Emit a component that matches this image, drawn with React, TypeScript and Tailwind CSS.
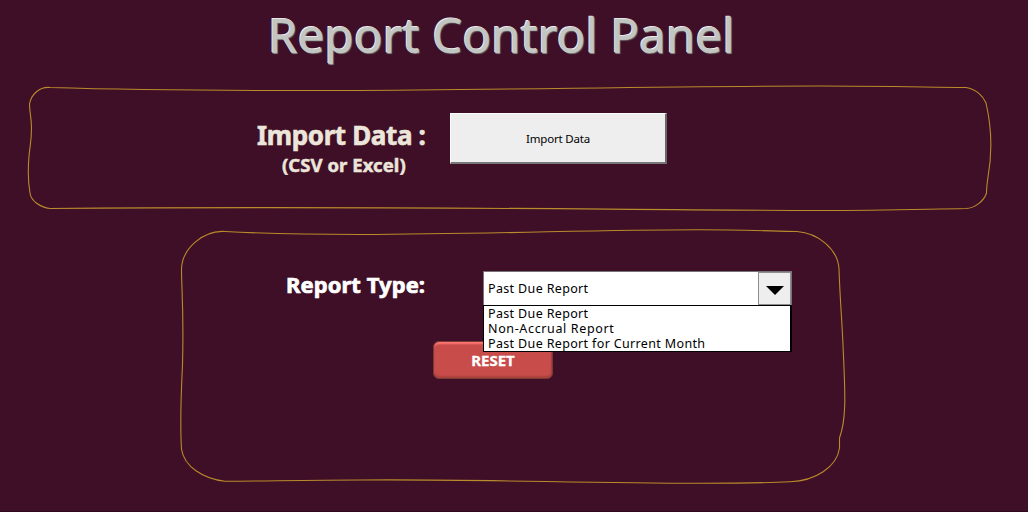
import React from 'react';

const options = [
  { label: 'Past Due Report', spacing: 'tracking-[0.350px]' },
  { label: 'Non-Accrual Report', spacing: 'tracking-[0.640px]' },
  { label: 'Past Due Report for Current Month', spacing: 'tracking-[0.350px]' },
];

export default function App() {
  return (
    <main className="flex h-[512px] w-[1028px] flex-col overflow-hidden border-b border-[#2c0a1c] bg-[#3f0f28] font-['Noto_Sans','Open_Sans',sans-serif]">
      <header className="flex h-[85px] shrink-0 pl-[268px]">
        <h1 className="h-[70px] whitespace-nowrap text-[47.500px] leading-[70px] tracking-[0.120px] text-[#c3c5c3] [-webkit-text-stroke:0.5px_#c3c5c3] [text-shadow:-1px_-1px_0_#f4f4f4,1px_1px_1px_#6b706b]">
          Report Control Panel
        </h1>
      </header>

      <section className="relative ml-[27px] flex h-[127px] w-[966px] shrink-0">
        <svg className="absolute inset-0" width="966" height="127" viewBox="27 85 966 127" fill="none">
          <path
            d="M50 87.5C150 90.5 240 90.7 340 90.5C520 90 650 86 820 86C880 86 920 87 966 87.5C976 89 983 96 986 103C992 129 992.5 152 988 177C987 184 986.5 188 986.5 193C984 201 975 208 966 208.5C910 209.5 880 210.5 820 210.5C600 210 400 205.500 50 208.500C40 207 31 201 30 193C28 182 28 168 29 156C30 146 31.500 141 31.500 128C31.500 118 29.500 112 29.500 104C31 95 39 86.500 50 87.500Z"
            stroke="#b98b2b"
            strokeWidth="1.1"
          />
        </svg>
        <div className="flex h-[90px] w-[423px] flex-col pt-[32px] text-[#ece6da]">
          <h2 className="ml-[230px] whitespace-nowrap text-[26px] leading-[36px] font-bold tracking-[-0.380px] [-webkit-text-stroke:0.6px_#ece6da]">
            Import Data :
          </h2>
          <p className="ml-[255px] whitespace-nowrap text-[18.500px] leading-[24px] font-bold tracking-[0.060px] [-webkit-text-stroke:0.5px_#ece6da]">
            (CSV or Excel)
          </p>
        </div>
        <button className="mt-[28px] h-[51px] w-[217px] border border-t-white border-r-2 border-r-[#6b6668] border-b-2 border-b-[#777678] border-l-white bg-[#eee] pt-[2px] text-[11.500px] tracking-[-0.200px] text-black">
          Import Data
        </button>
      </section>

      <section className="relative mt-[17px] ml-[179px] flex h-[257px] w-[669px] shrink-0 flex-col">
        <svg className="absolute inset-0" width="669" height="257" viewBox="179 229 669 257" fill="none">
          <path
            d="M225 231.500C280 234.500 310 234.500 360 234.500C500 234 600 229.500 700 229.700C740 229.700 770 231 797 231.500C818 233 838 249 839 269C840 300 842 320 843 345C845 390 847 418 839.500 438V448C837 467 815 481 790 481.700C765 483 740 483.300 700 483.300C580 483.300 480 479 360 480C310 480 270 481 225 481.300C204 479 184 467 181.500 449C180 425 181 395 182.500 365C184 310 181.500 290 181.500 269C182 249 203 230 225 231.500Z"
            stroke="#b98b2b"
            strokeWidth="1.1"
          />
        </svg>
        <div className="relative flex h-[77px] pt-[42px]">
          <h2 className="-mt-px h-[28px] w-[304px] pl-[107px] text-[22px] leading-[28px] font-bold tracking-[0.060px] whitespace-nowrap text-white [-webkit-text-stroke:0.7px_white]">
            Report Type:
          </h2>
          <div className="relative flex h-[35px] w-[309px] border border-[#777477] bg-white text-[12.500px] tracking-[0.350px] text-black">
            <span className="flex-1 pl-[4px] leading-[33px]">Past Due Report</span>
            <span className="flex w-[33px] items-center justify-center border border-[#8d8d8d] bg-[#eee]">
              <svg width="18" height="9" viewBox="0 0 18 9" className="mt-[3px]">
                <path d="M0 0H18L9 9Z" />
              </svg>
            </span>
            <ul className="absolute top-[33px] left-[-1px] z-10 h-[47px] w-[309px] border border-r-2 border-black bg-white pl-[4px] leading-[15px] whitespace-nowrap">
              {options.map((option) => (
                <li key={option.label} className={option.spacing}>
                  {option.label}
                </li>
              ))}
            </ul>
          </div>
        </div>
        <button className="mt-[35px] ml-[254px] h-[38px] w-[120px] rounded-[6px] border border-[#793a32] bg-[#c84c4a] text-[15px] font-bold text-white shadow-[inset_0_3px_2px_-1px_#ff7775,inset_0_-2px_2px_#a8423f,inset_-1px_0_1px_#983d3a] [-webkit-text-stroke:0.3px_white]">
          RESET
        </button>
      </section>
    </main>
  );
}
